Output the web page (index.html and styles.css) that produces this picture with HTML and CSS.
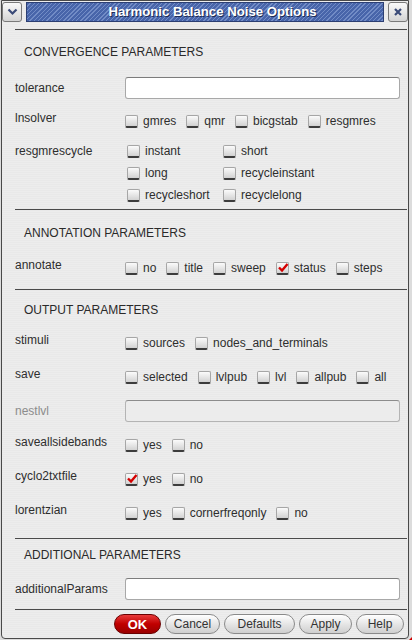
FILE: index.html
```html
<!DOCTYPE html>
<html>
<head>
<meta charset="utf-8">
<link rel="stylesheet" href="styles.css">
</head>
<body>
<div class="window">
  <div class="titlebar">
    <div class="tb-btn">
      <svg width="11" height="8" viewBox="0 0 11 8"><path d="M1.5 1.5 L5.5 5.5 L9.5 1.5" fill="none" stroke="#3a4a78" stroke-width="2.2"/></svg>
    </div>
    <div class="tb-title"><span>Harmonic Balance Noise Options</span></div>
    <div class="tb-btn">
      <svg width="10" height="10" viewBox="0 0 10 10"><path d="M2 2 L8 8 M8 2 L2 8" fill="none" stroke="#3a4a78" stroke-width="2.2"/></svg>
    </div>
  </div>
  <div class="content">
    <div class="sep s1"></div>
    <div class="heading h1">CONVERGENCE PARAMETERS</div>
    <div class="row irow"><div class="label">tolerance</div><div class="input"></div></div>
    <div class="row crow r-lnsolver"><div class="label">lnsolver</div>
      <div class="opts">
        <span class="opt"><span class="cb"></span>gmres</span>
        <span class="opt"><span class="cb"></span>qmr</span>
        <span class="opt"><span class="cb"></span>bicgstab</span>
        <span class="opt"><span class="cb"></span>resgmres</span>
      </div>
    </div>
    <div class="row gridrow"><div class="label">resgmrescycle</div>
      <div class="grid2">
        <span class="opt"><span class="cb"></span>instant</span>
        <span class="opt"><span class="cb"></span>short</span>
        <span class="opt"><span class="cb"></span>long</span>
        <span class="opt"><span class="cb"></span>recycleinstant</span>
        <span class="opt"><span class="cb"></span>recycleshort</span>
        <span class="opt"><span class="cb"></span>recyclelong</span>
      </div>
    </div>
    <div class="sep s2"></div>
    <div class="heading h2">ANNOTATION PARAMETERS</div>
    <div class="row crow"><div class="label">annotate</div>
      <div class="opts">
        <span class="opt"><span class="cb"></span>no</span>
        <span class="opt"><span class="cb"></span>title</span>
        <span class="opt"><span class="cb"></span>sweep</span>
        <span class="opt"><span class="cb on"><svg width="12" height="11" viewBox="0 0 12 11"><path d="M2 5.5 L5 8.5 L10.5 2" fill="none" stroke="#d40000" stroke-width="2.4"/></svg></span>status</span>
        <span class="opt"><span class="cb"></span>steps</span>
      </div>
    </div>
    <div class="sep s3"></div>
    <div class="heading h3">OUTPUT PARAMETERS</div>
    <div class="row crow"><div class="label">stimuli</div>
      <div class="opts">
        <span class="opt"><span class="cb"></span>sources</span>
        <span class="opt"><span class="cb"></span>nodes_and_terminals</span>
      </div>
    </div>
    <div class="row crow gap12"><div class="label">save</div>
      <div class="opts">
        <span class="opt"><span class="cb"></span>selected</span>
        <span class="opt"><span class="cb"></span>lvlpub</span>
        <span class="opt"><span class="cb"></span>lvl</span>
        <span class="opt"><span class="cb"></span>allpub</span>
        <span class="opt"><span class="cb"></span>all</span>
      </div>
    </div>
    <div class="row irow gap12"><div class="label disabled">nestlvl</div><div class="input dis"></div></div>
    <div class="row crow gap12"><div class="label">saveallsidebands</div>
      <div class="opts">
        <span class="opt"><span class="cb"></span>yes</span>
        <span class="opt"><span class="cb"></span>no</span>
      </div>
    </div>
    <div class="row crow gap12"><div class="label">cyclo2txtfile</div>
      <div class="opts">
        <span class="opt"><span class="cb on"><svg width="12" height="11" viewBox="0 0 12 11"><path d="M2 5.5 L5 8.5 L10.5 2" fill="none" stroke="#d40000" stroke-width="2.4"/></svg></span>yes</span>
        <span class="opt"><span class="cb"></span>no</span>
      </div>
    </div>
    <div class="row crow gap12"><div class="label">lorentzian</div>
      <div class="opts">
        <span class="opt"><span class="cb"></span>yes</span>
        <span class="opt"><span class="cb"></span>cornerfreqonly</span>
        <span class="opt"><span class="cb"></span>no</span>
      </div>
    </div>
    <div class="sep s4"></div>
    <div class="heading h4">ADDITIONAL PARAMETERS</div>
    <div class="row irow"><div class="label">additionalParams</div><div class="input"></div></div>
    <div class="sep s5"></div>
    <div class="buttons">
      <div class="btn ok">OK</div>
      <div class="btn b-cancel">Cancel</div>
      <div class="btn b-defaults">Defaults</div>
      <div class="btn b-apply">Apply</div>
      <div class="btn b-help">Help</div>
    </div>
  </div>
  <div class="grip"></div>
</div>
</body>
</html>
```

FILE: styles.css
```css
html, body {
  margin: 0;
  padding: 0;
  background: #dcdcdc;
}
body {
  width: 412px;
  height: 640px;
  overflow: hidden;
  font-family: "Liberation Sans", Arial, sans-serif;
  font-size: 12px;
  color: #2e2e2e;
}
.window {
  position: relative;
  width: 406px;
  height: 637px;
  border: 1px solid #4a4a4a;
  border-radius: 0 0 4px 4px;
  background: #ececec repeating-linear-gradient(0deg, #ededed 0, #ededed 1px, #e9e9e9 1px, #e9e9e9 2px);
  box-sizing: content-box;
  margin-left: 1px;
}
.titlebar {
  display: flex;
  height: 20px;
  margin: 1px 0 0 0;
  gap: 3px;
}
.tb-btn {
  width: 18px;
  height: 18px;
  border: 1px solid #7a7a7a;
  border-radius: 3px;
  background: linear-gradient(#fafafa, #d4d4d4);
  display: flex;
  align-items: center;
  justify-content: center;
  flex: none;
}
.tb-title {
  flex: 1;
  margin: 0 1px;
  border: 1px solid #2c3f73;
  background: #4c69ad repeating-linear-gradient(135deg, #4865aa 0, #4865aa 2px, #728cc6 2px, #728cc6 3px);
  display: flex;
  align-items: center;
  justify-content: center;
  padding-left: 15px;
  color: #fff;
  font-weight: bold;
  font-size: 13.2px;
  text-shadow: 1px 1px 0 #1e2c55;
}
.tb-title span {
  line-height: 16px;
}
.content {
  padding: 0 1px 0 13px;
}
.sep {
  border-top: 1px solid #4a4a4a;
}
.s1 { margin-top: 7px; }
.s2 { margin-top: 3px; }
.s3 { margin-top: 10px; }
.s4 { margin-top: 14px; }
.s5 { margin-top: 9px; }
.heading {
  line-height: 14px;
  padding-left: 9px;
  color: #2a2a2a;
}
.h1 { padding-top: 15px; padding-bottom: 18px; }
.h2 { padding-top: 16px; padding-bottom: 17px; }
.h3 { padding-top: 13px; padding-bottom: 15px; }
.h4 { padding-top: 9px; padding-bottom: 16px; }
.row {
  display: flex;
}
.label {
  width: 110px;
  flex: none;
  line-height: 14px;
  white-space: nowrap;
}
.label.disabled {
  color: #8c8c8c;
}
.irow {
  height: 22px;
  align-items: center;
}
.crow {
  height: 22px;
  align-items: flex-start;
}
.crow .label {
  padding-top: 1px;
}
.r-lnsolver { margin-top: 11px; }
.gap12 { margin-top: 12px; }
.input {
  flex: none;
  width: 273px;
  height: 20px;
  border: 1px solid #a8a8a8;
  border-top-color: #7c7c7c;
  border-radius: 3px;
  background: #fff;
}
.input.dis {
  background: #ececec;
  border-color: #b4b4b4;
  border-top-color: #8c8c8c;
}
.opts {
  display: flex;
  align-items: center;
  height: 22px;
  gap: 10px;
}
.opt {
  display: flex;
  align-items: center;
  gap: 5px;
  white-space: nowrap;
  line-height: 14px;
}
.cb {
  width: 11px;
  height: 10px;
  border: 1px solid #a6a6a6;
  border-bottom: 2px solid #3c3c3c;
  border-radius: 2px;
  background: linear-gradient(#fbfbfb, #d2d2d2);
  flex: none;
  position: relative;
}
.cb svg {
  position: absolute;
  left: 0;
  top: -1px;
}
.gridrow {
  margin-top: 8px;
}
.gridrow .label {
  padding-top: 4px;
}
.grid2 {
  display: grid;
  grid-template-columns: 96px 120px;
  grid-auto-rows: 22px;
  margin-left: 2px;
}
.grid2 .opt {
  height: 22px;
}
.buttons {
  display: flex;
  justify-content: flex-end;
  gap: 4px;
  margin-top: 4px;
  padding-right: 3px;
}
.btn {
  height: 18px;
  border: 1px solid #8a8a8a;
  border-radius: 10px;
  background: linear-gradient(#ffffff, #e6e6e6 50%, #cfcfcf);
  display: flex;
  align-items: center;
  justify-content: center;
  color: #333;
  font-size: 12px;
}
.ok {
  width: 45px;
  background: linear-gradient(#e83a3a, #c00000 50%, #9a0000);
  border-color: #6a0000;
  color: #fff;
  font-weight: bold;
  font-size: 13px;
}
.b-cancel { width: 53px; }
.b-defaults { width: 69px; }
.b-apply { width: 51px; }
.b-help { width: 46px; }
.grip {
  position: absolute;
  right: -6px;
  bottom: -3px;
  width: 0;
  height: 0;
  border-left: 6px solid transparent;
  border-bottom: 6px solid #d00000;
}
```
